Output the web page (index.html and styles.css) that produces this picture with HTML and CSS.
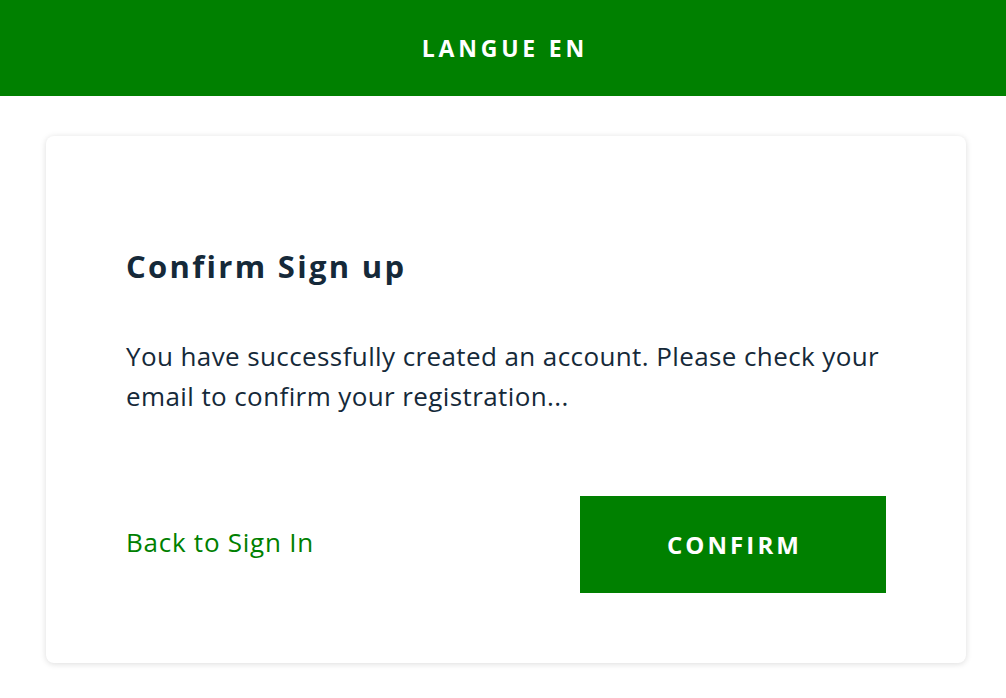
FILE: index.html
```html
<!DOCTYPE html>
<html lang="en">
<head>
<meta charset="utf-8">
<title>Confirm Sign up</title>
<link rel="stylesheet" href="styles.css">
</head>
<body>
<header class="topbar">
  <span class="lang">LANGUE EN</span>
</header>
<main class="page">
  <section class="card">
    <h1 class="title">Confirm Sign up</h1>
    <p class="message">You have successfully created an account. Please check your email to confirm your registration...</p>
    <div class="actions">
      <a class="back-link" href="#">Back to Sign In</a>
      <button class="confirm-btn" type="button">CONFIRM</button>
    </div>
  </section>
</main>
</body>
</html>
```

FILE: styles.css
```css
* { box-sizing: border-box; }
html, body { margin: 0; padding: 0; background: #ffffff; }
body {
  font-family: "Open Sans", "Noto Sans", "Liberation Sans", sans-serif;
  color: #152939;
}
.topbar {
  height: 96px;
  background: #008000;
  display: flex;
  align-items: center;
  justify-content: center;
}
.lang {
  color: #ffffff;
  font-weight: 700;
  font-size: 23px;
  letter-spacing: 3.8px;
  margin-right: -3.8px;
}
.page {
  padding: 40px 40px 30px 46px;
}
.card {
  width: 920px;
  background: #ffffff;
  border-radius: 8px;
  box-shadow: 0 1px 6px rgba(0, 0, 0, 0.14);
  padding: 108px 80px 70px 80px;
}
.title {
  margin: 0;
  font-size: 31px;
  font-weight: 700;
  line-height: 44px;
  letter-spacing: 2.3px;
  color: #152939;
}
.message {
  margin: 48px 0 0 0;
  font-size: 26px;
  line-height: 40px;
  letter-spacing: 0.4px;
  color: #152939;
}
.actions {
  margin-top: 80px;
  display: flex;
  align-items: center;
  justify-content: space-between;
}
.back-link {
  color: #008000;
  text-decoration: none;
  font-size: 26px;
  letter-spacing: 0.75px;
  padding-bottom: 6px;
}
.confirm-btn {
  width: 306px;
  height: 97px;
  background: #008000;
  border: none;
  color: #ffffff;
  font-family: inherit;
  font-size: 24px;
  font-weight: 700;
  letter-spacing: 3.1px;
  padding: 0 0 0 3px;
}
```
